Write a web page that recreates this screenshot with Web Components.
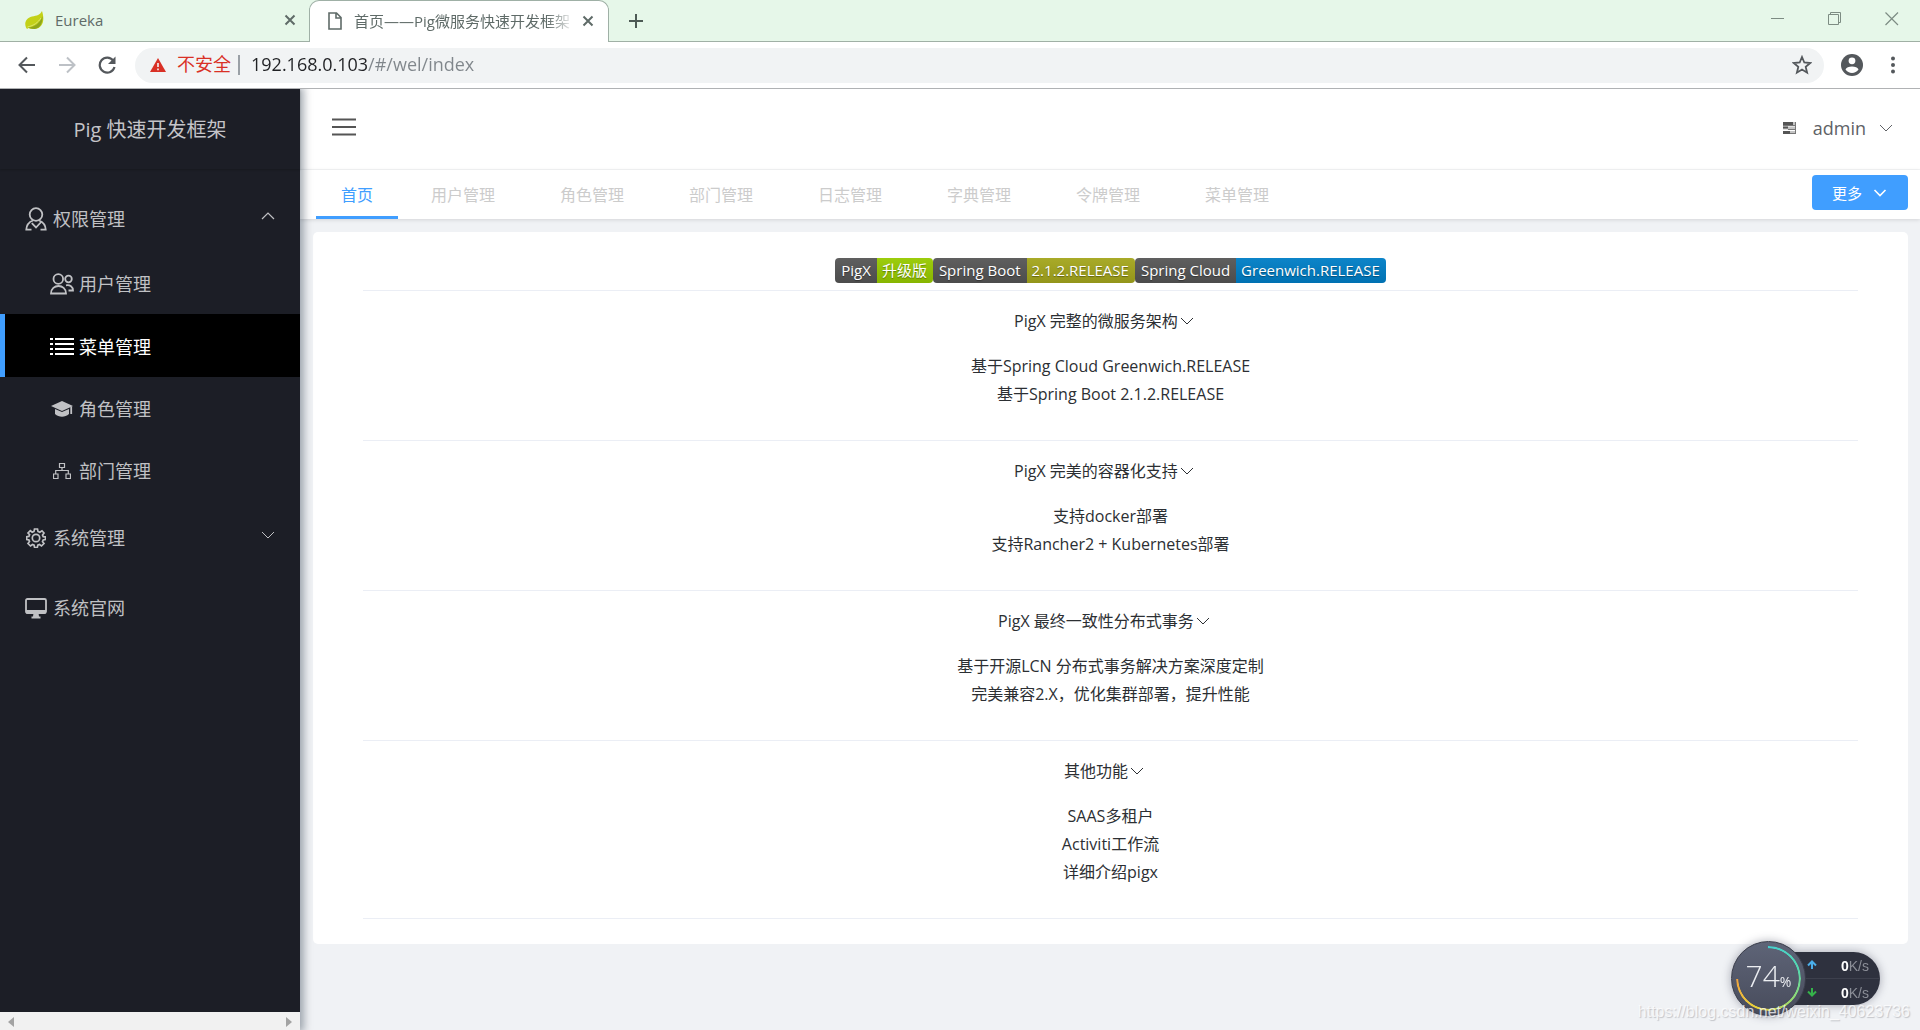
<!DOCTYPE html>
<html lang="zh-CN">
<head>
<meta charset="utf-8">
<title>首页——Pig微服务快速开发框架</title>
<style>
html,body{height:100%;margin:0}
body{font-family:"Open Sans","Noto Sans CJK SC",sans-serif;font-size:16px;color:#2c2f33;background:#f0f2f5;overflow:hidden}
</style>
</head>
<body>
<pig-window></pig-window>
<script>
const define = (name, html, setup) => {
  const tpl = document.createElement('template');
  tpl.innerHTML = html;
  customElements.define(name, class extends HTMLElement {
    connectedCallback() {
      if (this.shadowRoot) return;
      this.attachShadow({ mode: 'open' }).append(tpl.content.cloneNode(true));
      if (setup) setup(this, this.shadowRoot);
    }
  });
};

/* name: [viewBox width, viewBox height, markup] */
const ICONS = {
  leaf: [20, 18, '<path d="M17 0C20 9 18 17 10 18C7 18.300 5 17.500 3.500 17L2 18L1 16.500C-1 12 1 7 7 5.500C12 4.500 15 4 17 0z" fill="#c3d117"/><path d="M3 16.500C10 16 15 12 17.500 5C18 12 15 17.500 9.500 18C6 18 4 17 3 16.500z" fill="#8fa61c"/><path d="M2.500 16C9 14.500 13 11.500 16 7" fill="none" stroke="#dce66c"/>'],
  page: [14, 18, '<path d="M1 1h7.500l4.500 4.500V17H1z M8 1v5h5" fill="none" stroke="currentColor" stroke-width="1.600"/>'],
  cross: [12, 12, '<path d="M1.500 1.500l9 9m0-9l-9 9" stroke="currentColor" stroke-width="2"/>'],
  plus: [16, 16, '<path d="M8 1v14M1 8h14" stroke="currentColor" stroke-width="2"/>'],
  back: [18, 18, '<path d="M17 9H2M9 1.500L1.500 9L9 16.500" fill="none" stroke="currentColor" stroke-width="2"/>'],
  forward: [18, 18, '<path d="M1 9h15M9 1.500L16.500 9L9 16.500" fill="none" stroke="currentColor" stroke-width="2"/>'],
  reload: [18, 18, '<path d="M15.200 4.500A7.500 7.500 0 1 0 16.500 11" fill="none" stroke="currentColor" stroke-width="2.200"/><path d="M17.500 0.500v7.500H10z" fill="currentColor"/>'],
  warn: [16, 14, '<path d="M8 0l8 14H0z" fill="currentColor"/><path d="M8 5v4M8 10.500v1.700" stroke="#f1f3f4" stroke-width="1.600"/>'],
  star: [20, 20, '<path d="M10 2l2.300 5.500 5.900.500-4.500 3.900 1.400 5.800L10 14.600l-5.100 3.100 1.400-5.800L1.800 8l5.900-.500z" fill="none" stroke="currentColor" stroke-width="1.800"/>'],
  account: [22, 22, '<circle cx="11" cy="11" r="11" fill="currentColor"/><circle cx="11" cy="6.800" r="3.400" fill="#fff"/><path d="M4.500 15.500C5.500 11.500 16.500 11.500 17.500 15.500C14.500 20 7.500 20 4.500 15.500z" fill="#fff"/>'],
  dots: [4, 18, '<circle cx="2" cy="2.500" r="2" fill="currentColor"/><circle cx="2" cy="9" r="2" fill="currentColor"/><circle cx="2" cy="15.500" r="2" fill="currentColor"/>'],
  min: [14, 14, '<path d="M0 6.500h13" stroke="currentColor"/>'],
  restore: [14, 14, '<path d="M.500 2.500h10v10H.500zM2.500 2V.500h10v10H11" fill="none" stroke="currentColor"/>'],
  close: [14, 14, '<path d="M.500.500l12.500 12.500M13 .500L.500 13" stroke="currentColor" stroke-width="1.200"/>'],
  down: [14, 8, '<path d="M1 1l6 6 6-6" fill="none" stroke="currentColor" stroke-width="1"/>'],
  up: [14, 8, '<path d="M1 7l6-6 6 6" fill="none" stroke="currentColor" stroke-width="1.200"/>'],
  downbold: [14, 8, '<path d="M1.500 1l5.500 5.500L12.500 1" fill="none" stroke="currentColor" stroke-width="1.600"/>'],
  auth: [22, 24, '<g fill="none" stroke="currentColor" stroke-width="1.800"><circle cx="11" cy="7.500" r="6.300"/><path d="M8 13.500C4 15 1.500 18 1.300 22.600H6.500M14 13.500C18 15 20.500 18 20.700 22.600H15.500"/><path d="M6.800 16.200l4.200 4.300 5.600-6"/></g>'],
  users: [24, 22, '<g fill="none" stroke="currentColor" stroke-width="1.800"><circle cx="8.300" cy="6" r="4.800"/><path d="M1 20.500C1 10.500 16 10.500 16 20.500z"/><circle cx="18.500" cy="6" r="3.300"/><path d="M16 12.300C20 11.500 23 14 23 17.500H18.500"/></g>'],
  list: [24, 20, '<path d="M5 2h19M5 7h19M5 12h19M5 17h19" stroke="currentColor" stroke-width="2"/><path d="M0 2h3M0 7h3M0 12h3M0 17h3" stroke="currentColor" stroke-width="2"/>'],
  cap: [22, 16, '<path d="M0 5L11 0l11 5-11 5z" fill="currentColor"/><path d="M4 8l7 3 7-3v5C14 16.500 8 16.500 4 13z" fill="currentColor"/><path d="M20.200 5.500V13" stroke="currentColor" stroke-width="1.800"/>'],
  org: [18, 16, '<path d="M6.500.500h5v4h-5zM.500 11h4.500v4.500H.500zM13 11h4.500v4.500H13zM9 4.500V7.500M2.700 11V7.500h12.600V11" fill="none" stroke="currentColor" stroke-width="1.200"/>'],
  gear: [20, 20, '<g fill="none" stroke="currentColor" stroke-width="1.700"><circle cx="10" cy="10" r="3.700"/><path d="M8.500 1h3l.500 2.500 1.800.800L16 2.800 18 5l-1.500 2 .700 1.600 2.300.300v2.600l-2.300.500-.700 1.700L18 15.500 15.500 18l-2-1.500-1.700.700-.500 2.300H8.600l-.500-2.300-1.600-.700L4.500 18 2 15.500l1.500-2-.700-1.700L.700 11.500V8.700l2.200-.300.700-1.700L2 5l2.300-2.300 2 1.500L8 3.500z"/></g>'],
  monitor: [22, 21, '<path d="M2.500 1h17q1.500 0 1.500 1.500v11q0 1.500-1.500 1.500h-17Q1 15 1 13.500v-11Q1 1 2.500 1z" fill="none" stroke="currentColor" stroke-width="1.800"/><path d="M1 12h20v3.500H1zM8.500 15h5l.500 3.500h1.500V20.500H6.500V18.500H8z" fill="currentColor"/>'],
  burger: [24, 18, '<path d="M0 1.500h24M0 9h24M0 16.500h24" stroke="currentColor" stroke-width="2"/>'],
  theme: [13, 12, '<path d="M0 0h13v3H0zM0 4.500h13v3H0zM0 9h13v3H0z" fill="#c4c4c4"/><path d="M0 0h10v3H0zM0 4.500h5v2H0zM0 9h7v3H0z" fill="#555"/><path d="M0 3.500h13M5 7.500h8M7 11.500h6M12.500 0v12" stroke="#777"/>'],
  left: [6, 10, '<path d="M6 0v10L0 5z" fill="currentColor"/>'],
  right: [6, 10, '<path d="M0 0v10l6-5z" fill="currentColor"/>'],
  upload: [10, 10, '<path d="M5 9V2M1 5.500l4-4 4 4" fill="none" stroke="currentColor" stroke-width="2"/>'],
  download: [10, 10, '<path d="M5 1v7M1 4.500l4 4 4-4" fill="none" stroke="currentColor" stroke-width="2"/>']
};
customElements.define('ui-icon', class extends HTMLElement {
  connectedCallback() {
    if (this.shadowRoot) return;
    const [w, h, body] = ICONS[this.getAttribute('name')];
    this.attachShadow({ mode: 'open' }).innerHTML =
      `<style>:host{display:inline-flex;flex:none}svg{display:block}</style><svg aria-hidden="true" width="${w}" height="${h}" viewBox="0 0 ${w} ${h}">${body}</svg>`;
  }
});

const BTN = 'button{font:inherit;color:inherit;background:none;border:0;padding:0;margin:0;cursor:pointer;display:inline-flex;align-items:center;justify-content:center}';

define('browser-tab', `<style>
:host{display:flex;align-items:center;box-sizing:border-box;height:42px;font-size:15px;color:#5f6b68;padding:0 13px 2px 25px}
:host([active]){background:#fff;border:1px solid #9fb0a6;border-bottom:0;border-radius:10px 10px 0 0;padding:0 14px 2px 18px}
${BTN}
.t{flex:1;min-width:0;margin:0 8px 0 10px;overflow:hidden;white-space:nowrap;line-height:24px}
:host([active]) .t{margin-left:12px;-webkit-mask-image:linear-gradient(90deg,#000 88%,transparent);mask-image:linear-gradient(90deg,#000 88%,transparent)}
</style><slot name="icon"></slot><span class="t"><slot></slot></span><button aria-label="关闭"><ui-icon name="cross"></ui-icon></button>`);

define('browser-chrome', `<style>
:host{display:block;flex:none}
${BTN}
.strip{display:flex;height:41px;background:#e6f7e9;border-bottom:1px solid #a0b0a5;color:#4d5a55}
.strip browser-tab:first-child{width:309px}
.strip browser-tab:nth-child(2){width:300px}
.new{width:54px;height:41px}
.win{margin-left:auto;display:flex;color:#7d8c83;padding-right:21px;gap:43px;height:37px;align-items:center}
.bar{display:flex;align-items:center;height:46px;background:#fff;border-bottom:1px solid #b0b2b4;color:#54585c;padding:0 25px 0 18px}
.nav{display:flex;gap:22px;margin-right:19px}
.omni{flex:1;display:flex;align-items:center;height:35px;border-radius:18px;background:#f1f3f4;padding:0 12px 0 15px;font-size:18px}
.bad,input{line-height:28px;padding:0 0 2px}
.bad{color:#d93025;margin:0 7px 0 11px}
input{flex:1;min-width:0;font-family:inherit;font-size:inherit;border:0;outline:0;margin-left:11px;height:28px;color:#202124;background:linear-gradient(90deg,#202124 117px,#80868b 117px);-webkit-background-clip:text;background-clip:text;-webkit-text-fill-color:transparent}
.sep{width:2px;height:20px;background:#9aa0a6}
.acts{display:flex;align-items:center;gap:28px;margin-left:17px}
.off{color:#bdc1c6}
</style>
<div class="strip">
<browser-tab><ui-icon slot="icon" name="leaf"></ui-icon>Eureka</browser-tab>
<browser-tab active><ui-icon slot="icon" name="page"></ui-icon>首页——Pig微服务快速开发框架</browser-tab>
<button class="new" aria-label="新标签页"><ui-icon name="plus"></ui-icon></button>
<div class="win"><button aria-label="最小化"><ui-icon name="min"></ui-icon></button><button aria-label="还原"><ui-icon name="restore"></ui-icon></button><button aria-label="关闭窗口"><ui-icon name="close"></ui-icon></button></div>
</div>
<div class="bar">
<div class="nav"><button aria-label="后退"><ui-icon name="back"></ui-icon></button><button class="off" aria-label="前进"><ui-icon name="forward"></ui-icon></button><button aria-label="刷新"><ui-icon name="reload"></ui-icon></button></div>
<div class="omni"><ui-icon name="warn" style="color:#d93025"></ui-icon><span class="bad">不安全</span><span class="sep"></span><input aria-label="地址" value="192.168.0.103/#/wel/index"><button aria-label="收藏"><ui-icon name="star"></ui-icon></button></div>
<div class="acts"><button aria-label="账户"><ui-icon name="account"></ui-icon></button><button aria-label="菜单"><ui-icon name="dots"></ui-icon></button></div>
</div>`);

define('menu-item', `<style>
:host{display:block;color:#c0c1c4;font-size:18px}
a{display:flex;align-items:center;height:70px;padding:4px 25px 0 24px;box-sizing:border-box;color:inherit;text-decoration:none;line-height:28px}
.i{width:24px;margin-right:5px;display:flex;justify-content:center}
.e{margin-left:auto;display:flex;padding-bottom:6px}
:host([sub]) a{height:62px;padding:2px 25px 0 50px}
:host([sub][active]) a{height:63px;background:#000;color:#fff;border-left:5px solid #409eff;padding-left:45px}
</style><a href="#"><span class="i"><slot name="icon"></slot></span><slot></slot><span class="e"><slot name="end"></slot></span></a>`);

define('side-menu', `<style>
:host{display:flex;flex-direction:column;width:300px;flex:none;background:#1c1e26;box-shadow:2px 0 8px 2px rgba(0,21,41,.35);position:relative;z-index:2;clip-path:inset(0 -20px 0 0)}
${BTN}
.logo{height:80px;padding-bottom:2px;box-sizing:border-box;display:flex;align-items:center;justify-content:center;font-size:20px;color:#c4c4c8;box-shadow:0 1px 2px rgba(0,0,0,.2)}
nav{flex:1;padding-top:13px;min-height:0}
.sb{height:18px;background:#f1f1f1;color:#a3a3a3;display:flex;justify-content:space-between;padding:2px 8px 0;box-sizing:border-box}
</style>
<div class="logo">Pig 快速开发框架</div>
<nav>
<menu-item><ui-icon slot="icon" name="auth"></ui-icon>权限管理<ui-icon slot="end" name="up"></ui-icon></menu-item>
<menu-item sub><ui-icon slot="icon" name="users"></ui-icon>用户管理</menu-item>
<menu-item sub active><ui-icon slot="icon" name="list"></ui-icon>菜单管理</menu-item>
<menu-item sub><ui-icon slot="icon" name="cap"></ui-icon>角色管理</menu-item>
<menu-item sub><ui-icon slot="icon" name="org"></ui-icon>部门管理</menu-item>
<menu-item><ui-icon slot="icon" name="gear"></ui-icon>系统管理<ui-icon slot="end" name="down"></ui-icon></menu-item>
<menu-item><ui-icon slot="icon" name="monitor"></ui-icon>系统官网</menu-item>
</nav>
<div class="sb"><button aria-label="向左滚动"><ui-icon name="left"></ui-icon></button><button aria-label="向右滚动"><ui-icon name="right"></ui-icon></button></div>`);

define('page-header', `<style>
:host{display:flex;align-items:center;justify-content:space-between;height:81px;box-sizing:border-box;background:#fff;border-bottom:1px solid #f4f5f6;padding:0 27px 2px 32px;flex:none;color:#555}
${BTN}
.u{display:flex;align-items:center;font-size:18px;color:#606266}
.u button{gap:13px;margin-left:17px}
.m{padding-bottom:2px}
</style><button class="m" aria-label="折叠菜单"><ui-icon name="burger"></ui-icon></button>
<div class="u"><ui-icon name="theme"></ui-icon><button>admin<ui-icon name="down"></ui-icon></button></div>`);

define('page-tabs', `<style>
:host{display:flex;align-items:flex-start;justify-content:space-between;height:49px;background:#fff;box-shadow:0 1px 4px rgba(0,0,0,.12);padding:0 12px 0 16px;flex:none}
${BTN}
nav{display:flex;gap:1px;height:49px}
a{padding:0 32px;line-height:50px;color:#ccc;text-decoration:none;box-sizing:border-box;height:49px}
a.on{color:#409eff;padding:0 25px;border-bottom:3px solid #409eff}
.more{background:#409eff;color:#fff;border-radius:4px;height:35px;margin-top:5px;padding:0 21px 0 20px;font-size:15px;gap:11px}
</style><nav><a class="on" href="#">首页</a><a href="#">用户管理</a><a href="#">角色管理</a><a href="#">部门管理</a><a href="#">日志管理</a><a href="#">字典管理</a><a href="#">令牌管理</a><a href="#">菜单管理</a></nav><button class="more">更多<ui-icon name="downbold"></ui-icon></button>`);

define('tag-badge', `<style>
:host{display:flex;height:25px;line-height:25px;font-size:15px;color:#fff;border-radius:4px;overflow:hidden;text-shadow:0 1px 1px rgba(0,0,0,.35)}
span{padding:0 6px;background:linear-gradient(#5f5f5f,#4c4c4c)}
.v{padding:0 6px 0 5px;background:linear-gradient(rgba(255,255,255,.05),rgba(0,0,0,.1)) var(--tone)}
span span,::slotted(span){padding:0}
</style><span><slot name="label"></slot></span><span class="v"><slot></slot></span>`);

define('feature-block', `<style>
:host{display:block;border-bottom:1px solid #ebeef5;padding:16px 0 32px;text-align:center;line-height:28px}
${BTN}
button{line-height:28px;gap:2px;padding-right:13px}
ul{list-style:none;margin:17px 0 0;padding:0}
::slotted(li){display:block}
</style><button><slot name="title"></slot><ui-icon name="down"></ui-icon></button><ul><slot></slot></ul>`);

define('welcome-card', `<style>
:host{display:block;margin:13px 12px 0 13px;background:#fff;border-radius:5px;padding:26px 50px 25px}
.b{display:flex;justify-content:center;padding-bottom:7px;border-bottom:1px solid #ebeef5}
</style>
<div class="b"><tag-badge style="--tone:#97ca00"><span slot="label">PigX</span>升级版</tag-badge><tag-badge style="--tone:#a4a61d"><span slot="label">Spring Boot</span>2.1.2.RELEASE</tag-badge><tag-badge style="--tone:#007ec6"><span slot="label">Spring Cloud</span>Greenwich.RELEASE</tag-badge></div>
<feature-block><span slot="title">PigX 完整的微服务架构</span><li>基于Spring Cloud Greenwich.RELEASE</li><li>基于Spring Boot 2.1.2.RELEASE</li></feature-block>
<feature-block><span slot="title">PigX 完美的容器化支持</span><li>支持docker部署</li><li>支持Rancher2 + Kubernetes部署</li></feature-block>
<feature-block><span slot="title">PigX 最终一致性分布式事务</span><li>基于开源LCN 分布式事务解决方案深度定制</li><li>完美兼容2.X，优化集群部署，提升性能</li></feature-block>
<feature-block><span slot="title">其他功能</span><li>SAAS多租户</li><li>Activiti工作流</li><li>详细介绍pigx</li></feature-block>`);

define('net-monitor', `<style>
:host{position:absolute;right:40px;bottom:14px;display:flex;align-items:center;z-index:5;color:#fff;filter:drop-shadow(0 0 5px rgba(20,24,50,.35))}
.dial{width:75px;height:75px;border-radius:50%;background:linear-gradient(#5e6477,#484c5c);border:1px solid #3a3d4a;box-sizing:border-box;display:grid;place-items:center;position:relative;z-index:1}
.ring{position:absolute;inset:4px;border-radius:50%;background:conic-gradient(#45d0cf,#55d8b0 20%,#8edb76 35%,#e8d63c 55%,#f0a23c 75%,transparent 75%);-webkit-mask:radial-gradient(closest-side,transparent 92%,#000 94%);mask:radial-gradient(closest-side,transparent 92%,#000 94%)}
.n{font-family:"Open Sans",sans-serif;font-weight:300;font-size:30px;line-height:36px;color:#eceef2}
.n small{font-size:14px;font-weight:400}
.rates{width:88px;margin-left:-14px;background:#2e313e;border-radius:0 27px 27px 0;box-sizing:border-box;font-family:"Liberation Sans",sans-serif;font-size:14px}
.r{display:flex;align-items:center;justify-content:space-between;height:26px;padding:0 11px 0 15px;color:#8b8e97}
.r+.r{border-top:1px solid #3d404d}
.r span{padding-top:2px}
b{color:#fff}
</style><div class="dial"><div class="ring"></div><span class="n">74<small>%</small></span></div>
<div class="rates"><div class="r"><ui-icon name="upload" style="color:#4aaeea"></ui-icon><span><b>0</b>K/s</span></div><div class="r"><ui-icon name="download" style="color:#35b24a"></ui-icon><span><b>0</b>K/s</span></div></div>`);

define('pig-window', `<style>
:host{display:flex;flex-direction:column;height:100vh;position:relative;overflow:hidden}
.app{flex:1;display:flex;min-height:0}
main{flex:1;min-width:0;display:flex;flex-direction:column}
.mark{position:absolute;right:10px;bottom:8px;z-index:6;font:16px/20px "Liberation Sans",sans-serif;color:rgba(255,255,255,.75);text-shadow:1px 1px 1px rgba(90,90,100,.3)}
</style><browser-chrome></browser-chrome>
<div class="app"><side-menu></side-menu><main><page-header></page-header><page-tabs></page-tabs><welcome-card></welcome-card></main></div>
<net-monitor></net-monitor><span class="mark">https://blog.csdn.net/weixin_40623736</span>`);
</script>
</body>
</html>
